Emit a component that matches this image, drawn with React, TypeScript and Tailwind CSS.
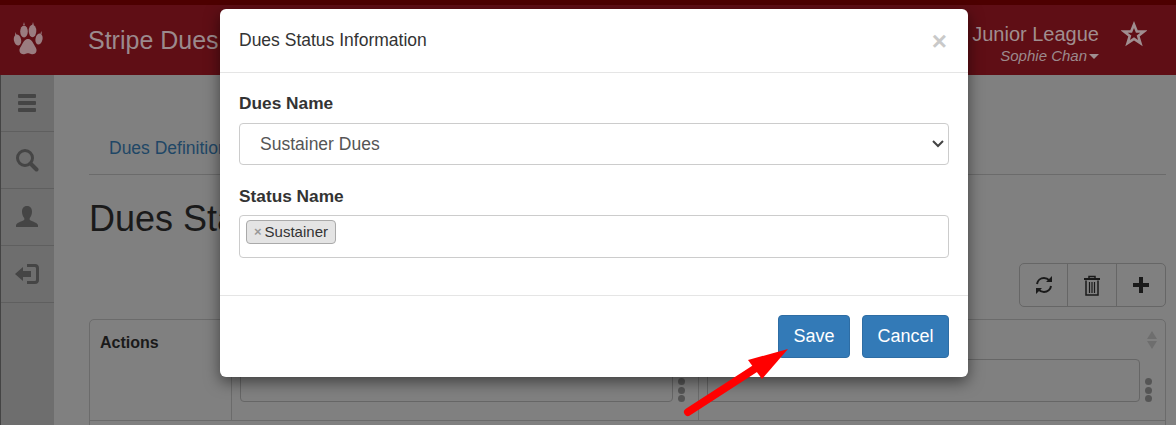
const font = "font-['Liberation_Sans',Arial,sans-serif]";

function Paw() {
  return (
    <svg width="30" height="36" viewBox="0 0 30 36" fill="#9a7c80">
      <ellipse cx="4.5" cy="18" rx="3.6" ry="5.6" transform="rotate(-12 4.5 18)" />
      <ellipse cx="11" cy="9.5" rx="3.8" ry="6" />
      <ellipse cx="19.5" cy="9" rx="3.8" ry="6.2" />
      <ellipse cx="26" cy="17" rx="3.5" ry="5.6" transform="rotate(12 26 17)" />
      <path d="M15 17c-3 0-4.500 2.500-6 5.500-1.200 2.400-3 4-2.500 6.500.5 2.600 3 3.700 5.500 3 1.200-.3 2-.8 3-.8s1.800.5 3 .8c2.500.7 5-.4 5.500-3 .5-2.500-1.300-4.100-2.500-6.500C19.500 19.500 18 17 15 17z" />
      <path d="M2.500 10l1 3-1.500.3zM11 0l.8 3h-1.600zM20 0l.8 3h-1.600zM28.500 9l.3 3-1.500-.4z" />
    </svg>
  );
}

function RailIcon({ children }: { children: React.ReactNode }) {
  return <div className="flex h-[57px] items-center justify-center border-b border-[#5f5f5f] pr-[2px]">{children}</div>;
}

function Kebab() {
  return (
    <div className="flex w-[14px] flex-col items-center gap-[1.500px]">
      <span className="h-[7px] w-[7px] rounded-full bg-[#555]" />
      <span className="h-[7px] w-[7px] rounded-full bg-[#555]" />
      <span className="h-[7px] w-[7px] rounded-full bg-[#555]" />
    </div>
  );
}

function Page() {
  return (
    <div className="flex h-[425px] w-[1176px] flex-col overflow-hidden bg-[#808080]">
      <div className="h-[5px] shrink-0 bg-[#4d0000]" />
      <header className="flex h-[70px] shrink-0 items-center bg-[#5f0e15] pl-[13px]">
        <Paw />
        <span className="ml-[45px] mt-[2px] text-[25px] text-[#9b8a8d]">Stripe Dues</span>
        <div className="ml-auto mr-[77px] mt-[8px] flex flex-col items-end">
          <span className="text-[20px] leading-[24px] text-[#a08e90]">Junior League</span>
          <span className="flex items-center text-[15px] leading-[20px] text-[#9c8a8d] italic">
            Sophie Chan
            <span className="ml-[2px] h-0 w-0 border-x-[5px] border-t-[5px] border-x-transparent border-t-[#a08e90]" />
          </span>
        </div>
        <svg className="absolute left-[1121px] top-[21px]" width="26" height="26" viewBox="0 0 26 26" fill="none" stroke="#a08e90" strokeWidth="2.600">
          <path d="M13 3.500l2.800 7h7.200l-5.800 4.500 2.200 7.200-6.400-4.300-6.400 4.300 2.200-7.200L3 10.500h7.200z" />
        </svg>
      </header>
      <div className="flex min-h-0 flex-1">
        <aside className="h-full w-[54px] border-l border-[#444] bg-[#6e6e6e]">
          <RailIcon>
            <svg width="20" height="18" viewBox="0 0 20 18" fill="#454545">
              <rect x="1" y="0" width="18" height="4" rx="1" />
              <rect x="1" y="7" width="18" height="4" rx="1" />
              <rect x="1" y="14" width="18" height="4" rx="1" />
            </svg>
          </RailIcon>
          <RailIcon>
            <svg width="24" height="24" viewBox="0 0 24 24" fill="none" stroke="#454545">
              <circle cx="10" cy="10" r="7.500" strokeWidth="3" />
              <path d="M15.500 15.500l6 6" strokeWidth="4" strokeLinecap="round" />
            </svg>
          </RailIcon>
          <RailIcon>
            <svg width="24" height="24" viewBox="0 0 24 24" fill="#454545">
              <path d="M12 1c3.500 0 5 2.700 5 5.700 0 2.800-1.200 5-2.300 6.300v2c1 .9 6.900 2.100 8.300 5v2H1v-2c1.400-2.900 7.300-4.100 8.300-5v-2C8.200 11.700 7 9.500 7 6.700 7 3.700 8.500 1 12 1z" />
            </svg>
          </RailIcon>
          <RailIcon>
            <svg width="26" height="22" viewBox="0 0 26 22" fill="#454545">
              <path d="M1 11l8-7v4h8v6H9v4z" />
              <path d="M13 1h8c2.500 0 4 1.500 4 4v12c0 2.500-1.500 4-4 4h-8v-3h7.500c1 0 1.500-.5 1.500-1.500v-11c0-1-.5-1.500-1.500-1.500H13z" />
            </svg>
          </RailIcon>
        </aside>
        <main className="min-w-0 flex-1 pl-[35px] pr-[10px]">
          <div className="h-[100px] border-b border-[#6b6b6b] pl-[20px] pt-[61px] text-[17.500px] leading-[24px] text-[#1f4766]">
            Dues Definition
          </div>
          <h1 className="mt-[22px] text-[36px] leading-[44px] text-[#1a1a1a]">Dues Status</h1>
          <div className="mt-[22px] flex justify-end">
            <div className="flex h-[44px] w-[147px] rounded-[5px] border border-[#666]">
              <div className="flex w-[48px] items-center justify-center border-r border-[#666]">
                <svg width="18" height="20" viewBox="0 0 18 20" fill="none" stroke="#1a1a1a" strokeWidth="2">
                  <path d="M2 9c.5-3.500 3.500-6 7-6 2.200 0 4 1 5.500 2.500" />
                  <path d="M16 11c-.5 3.500-3.500 6-7 6-2.200 0-4-1-5.500-2.500" />
                  <path d="M17 1v6h-6zM1 19v-6h6z" fill="#1a1a1a" stroke="none" />
                </svg>
              </div>
              <div className="flex w-[49px] items-center justify-center border-r border-[#666]">
                <svg width="18" height="21" viewBox="0 0 18 21" fill="none" stroke="#1a1a1a">
                  <path d="M1 4h16" strokeWidth="2" />
                  <path d="M6 3.500V1.500h6v2" strokeWidth="1.500" />
                  <path d="M3 5.500V20h12V5.500" strokeWidth="1.500" />
                  <path d="M6.500 7v11M9 7v11M11.500 7v11" strokeWidth="1.200" />
                </svg>
              </div>
              <div className="flex flex-1 items-center justify-center">
                <svg width="18" height="18" viewBox="0 0 18 18" fill="#1a1a1a">
                  <path d="M7 1h4v6h6v4h-6v6H7v-6H1V7h6z" />
                </svg>
              </div>
            </div>
          </div>
          <div className="mt-[12px] h-[200px] rounded-t-[5px] border border-[#6b6b6b]">
            <div className="grid h-[101px] grid-cols-[141px_467px_1fr] border-b border-[#6b6b6b]">
              <div className="pl-[10px] pt-[13px] text-[16px] leading-[20px] font-bold text-[#1a1a1a]">Actions</div>
              <div className="flex items-end gap-[1px] border-l border-[#6b6b6b] pb-[18px] pl-[8px]">
                <div className="h-[43px] w-[433px] rounded-[4px] border border-[#666]" />
                <Kebab />
              </div>
              <div className="relative flex items-end gap-[1px] border-l border-[#6b6b6b] pb-[18px] pl-[8px]">
                <div className="h-[43px] w-[433px] rounded-[4px] border border-[#666]" />
                <Kebab />
                <svg className="absolute right-[7px] top-[11px]" width="12" height="18" viewBox="0 0 12 18" fill="#6e6e6e">
                  <path d="M6 0l5 8H1zM6 18l5-8H1z" />
                </svg>
              </div>
            </div>
          </div>
        </main>
      </div>
    </div>
  );
}

export default function App() {
  return (
    <div className={`relative h-[425px] w-[1176px] overflow-hidden ${font}`}>
      <Page />
      <div className="absolute left-[220px] top-[9px] h-[368px] w-[748px] rounded-[6px] bg-white shadow-[0_5px_15px_rgba(0,0,0,0.5)]">
        <div className="flex h-[64px] items-center justify-between border-b border-[#e5e5e5] pl-[19px] pr-[21px]">
          <span className="text-[17.500px] text-[#333]">Dues Status Information</span>
          <span className="text-[26px] leading-none font-bold text-[#c9c9c9]">×</span>
        </div>
        <div className="h-[223px] border-b border-[#e5e5e5] px-[19px] pt-[19px]">
          <label className="block text-[17.300px] leading-[22px] font-bold text-[#333]">Dues Name</label>
          <div className="relative mt-[9px] w-[710px]">
            <select className="block h-[42px] w-full appearance-none rounded-[4px] border border-[#ccc] bg-white pl-[20px] pr-[12px] text-[17.500px] text-[#555]">
              <option>Sustainer Dues</option>
            </select>
            <svg className="pointer-events-none absolute right-[5px] top-[16px]" width="12" height="10" viewBox="0 0 12 10" fill="none" stroke="#444" strokeWidth="2">
              <path d="M1 2l5 5 5-5" />
            </svg>
          </div>
          <label className="mt-[20px] block text-[17.300px] leading-[22px] font-bold text-[#333]">Status Name</label>
          <div className="mt-[8px] flex h-[43px] w-[710px] items-start rounded-[4px] border border-[#ccc] pl-[6px] pt-[4px]">
            <span className="flex h-[24px] items-center rounded-[4px] border border-[#aaa] bg-[#e4e4e4] px-[7px] text-[15px] text-[#333]">
              <span className="mr-[3px] text-[13px] font-bold text-[#999]">×</span>
              Sustainer
            </span>
          </div>
        </div>
        <div className="flex justify-end gap-[12px] pr-[19px] pt-[19px]">
          <button className="h-[43px] w-[72px] rounded-[4px] border border-[#2e6da4] bg-[#337ab7] text-[18px] text-white">Save</button>
          <button className="h-[43px] w-[87px] rounded-[4px] border border-[#2e6da4] bg-[#337ab7] text-[18px] text-white">Cancel</button>
        </div>
      </div>
      <svg className="pointer-events-none absolute left-[680px] top-[340px]" width="115" height="80" viewBox="0 0 115 80" fill="#ff0000">
        <path d="M8 72L76 28" stroke="#ff0000" strokeWidth="8" strokeLinecap="round" />
        <path d="M108 9L68 20L82 39z" />
      </svg>
    </div>
  );
}
